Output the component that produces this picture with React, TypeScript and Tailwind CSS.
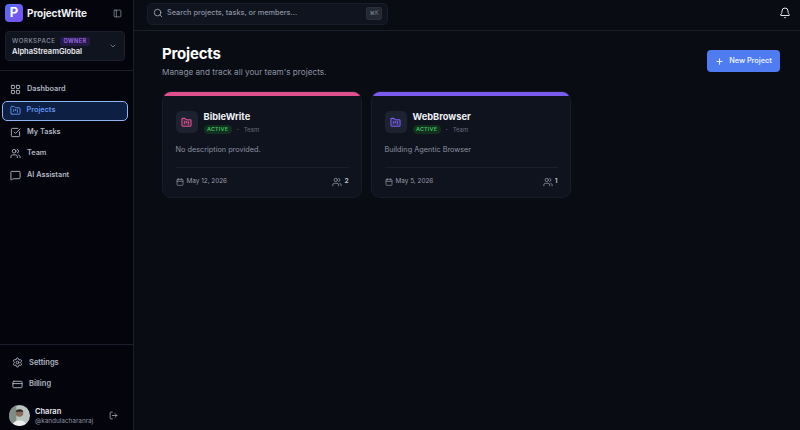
import { Bell, Calendar, ChevronDown, CreditCard, FolderKanban, LayoutGrid, LogOut, MessageSquare, PanelLeft, Plus, Search, Settings, SquareCheckBig, Users } from "lucide-react";

const navItems = [
  { label: "Dashboard", icon: LayoutGrid },
  { label: "Projects", icon: FolderKanban, active: true },
  { label: "My Tasks", icon: SquareCheckBig },
  { label: "Team", icon: Users },
  { label: "AI Assistant", icon: MessageSquare },
];

const projects = [
  { name: "BibleWrite", description: "No description provided.", date: "May 12, 2026", members: 2, bar: "bg-[#e0508f]", icon: "text-[#e0508f] fill-[#e0508f]/20" },
  { name: "WebBrowser", description: "Building Agentic Browser", date: "May 5, 2026", members: 1, bar: "bg-[#7c5cf0]", icon: "text-[#7c5cf0] fill-[#7c5cf0]/20" },
];

function Avatar() {
  return (
    <svg className="h-[21px] w-[21px] shrink-0 rounded-full" viewBox="0 0 20 20">
      <rect width="20" height="20" fill="#b9c4c0" />
      <rect width="7" height="20" fill="#7f8f86" />
      <circle cx="10" cy="7.5" r="3.6" fill="#8a6a58" />
      <path d="M6.4 6.5 C6.6 3.4 13.4 3.4 13.6 6.5 Z" fill="#2f2a28" />
      <path d="M3 20 C3.5 13 16.5 13 17 20 Z" fill="#eef0ee" />
    </svg>
  );
}

export default function App() {
  return (
    <div className="flex h-[430px] w-[800px] overflow-hidden bg-[#0a0c14] font-['Inter',sans-serif] text-white">
      <aside className="flex w-[134px] shrink-0 flex-col border-r border-[#1a1f2b] bg-[#03040c]">
        <div className="flex items-center pl-[5px] pt-[4px]">
          <div className="flex h-[18px] w-[18px] items-center justify-center rounded-[4px] bg-gradient-to-br from-[#4f6df5] to-[#7a4ff0] text-[13px] font-bold">P</div>
          <span className="ml-[4px] text-[10px] font-bold tracking-[-0.1px] text-[#eef0f4]">ProjectWrite</span>
          <PanelLeft className="ml-auto mr-[11px] h-[9px] w-[9px] text-[#8b91a0]" />
        </div>
        <div className="ml-[5px] mr-[8px] mt-[9px] flex h-[30px] items-center justify-between rounded-[4px] border border-[#1a1f2b] bg-[#10141f] pl-[6px] pr-[7px]">
          <div>
            <div className="flex items-center gap-[4px] leading-none">
              <span className="text-[6.2px] font-medium tracking-[0.5px] text-[#8b91a0]">WORKSPACE</span>
              <span className="rounded-[2px] bg-[#241a45] px-[4px] py-[1.5px] text-[5.5px] font-semibold tracking-[0.4px] text-[#a66cf0]">OWNER</span>
            </div>
            <div className="mt-[2px] text-[7.5px] font-semibold leading-none text-[#e8eaef]">AlphaStreamGlobal</div>
          </div>
          <ChevronDown className="h-[8px] w-[8px] text-[#9aa0ad]" />
        </div>
        <nav className="mt-[9px] flex flex-col gap-[1.5px] border-t border-[#1a1f2b] pl-[2px] pr-[5px] pt-[8px]">
          {navItems.map(({ label, icon: Icon, active }) => (
            <div
              key={label}
              className={
                active
                  ? "flex h-[20px] items-center gap-[6px] rounded-[5px] border-[1.5px] border-[#8cb4ee] bg-[#0e1f44] pl-[6.5px] text-[#5e96f2]"
                  : "flex h-[20px] items-center gap-[6px] rounded-[5px] border border-transparent pl-[7px] text-[#b0b5c0]"
              }
            >
              <Icon className="h-[11px] w-[11px]" />
              <span className="text-[7.3px] font-semibold">{label}</span>
            </div>
          ))}
        </nav>
        <div className="mt-auto border-t border-[#1a1f2b] pt-[7px]">
          <div className="flex h-[21px] items-center gap-[6px] pl-[12px] text-[#b0b5c0]">
            <Settings className="h-[11px] w-[11px]" />
            <span className="text-[7.5px] font-semibold">Settings</span>
          </div>
          <div className="flex h-[22px] items-center gap-[6px] pl-[12px] text-[#b0b5c0]">
            <CreditCard className="h-[11px] w-[11px]" />
            <span className="text-[7.5px] font-semibold">Billing</span>
          </div>
          <div className="mb-[4px] mt-[10px] flex h-[21px] items-center pl-[9px]">
            <Avatar />
            <div className="ml-[5px] pt-[1px]">
              <div className="text-[7.5px] font-semibold leading-[10px] text-[#e8eaef]">Charan</div>
              <div className="text-[6.4px] leading-[9px] text-[#8b91a0]">@kandulacharanraj</div>
            </div>
            <LogOut className="ml-auto mr-[15px] h-[9px] w-[9px] text-[#b0b5c0]" />
          </div>
        </div>
      </aside>

      <div className="flex min-w-0 flex-1 flex-col">
        <header className="flex h-[31px] shrink-0 items-start justify-between border-b border-[#1a1f2b] pl-[13px] pr-[9px] pt-[2.5px]">
          <div className="flex h-[22px] w-[241px] items-center rounded-[5px] border border-[#181d29] bg-[#10141f] pl-[5px] pr-[5px]">
            <Search className="mb-[1px] h-[10px] w-[10px] text-[#a4a9b5]" />
            <span className="ml-[4px] text-[7.3px] font-medium text-[#8b91a0]">Search projects, tasks, or members...</span>
            <span className="ml-auto flex h-[13px] w-[16px] items-center justify-center rounded-[2px] border border-[#2a2f3b] bg-[#232833] text-[5.5px] text-[#7d8391]">⌘K</span>
          </div>
          <Bell className="mt-[4.5px] h-[12px] w-[12px] text-[#e2e4e9]" />
        </header>

        <main className="flex-1 pl-[28px] pr-[20px] pt-[14px]">
          <div className="flex items-start justify-between">
            <div>
              <h1 className="text-[15px] font-bold leading-[18px] tracking-[-0.2px]">Projects</h1>
              <p className="mt-[3px] text-[8.2px] leading-[12px] text-[#8b91a0]">Manage and track all your team's projects.</p>
            </div>
            <button type="button" className="mt-[5px] flex h-[22px] w-[73px] items-center justify-center gap-[5px] rounded-[4px] bg-[#4f7cf0] text-[7.3px] font-semibold text-[#e6edff]">
              <Plus className="h-[9px] w-[9px]" strokeWidth={3} />
              New Project
            </button>
          </div>

          <section className="mt-[13px] grid grid-cols-3 gap-[9px]">
            {projects.map((project) => (
              <article key={project.name} className="h-[107px] overflow-hidden rounded-[9px] border border-[#171c28] bg-[#0f131e]">
                <div className={`h-[4px] ${project.bar}`} />
                <div className="px-[12.5px] pt-[14px]">
                  <div className="flex items-center gap-[6px]">
                    <div className="flex h-[22px] w-[22px] items-center justify-center rounded-[5px] bg-[#1c2230]">
                      <FolderKanban className={`h-[11px] w-[11px] ${project.icon}`} strokeWidth={2.25} />
                    </div>
                    <div>
                      <div className="text-[9.3px] font-bold leading-[13px] text-[#eef0f4]">{project.name}</div>
                      <div className="mt-[2px] flex items-center text-[6px] leading-[9px] text-[#666c79]">
                        <span className="rounded-full bg-[#12301f] px-[3.5px] text-[5.4px] font-semibold tracking-[0.2px] text-[#3fc060]">ACTIVE</span>
                        <span className="mx-[5px] font-bold">·</span>
                        <span>Team</span>
                      </div>
                    </div>
                  </div>
                  <p className="mt-[10px] text-[7.3px] leading-[11px] text-[#8b91a0]">{project.description}</p>
                  <div className="mt-[12px] flex items-center justify-between border-t border-[#1a1f2b] pt-[9px]">
                    <div className="flex items-center gap-[3px] text-[6.4px] text-[#969ba8]">
                      <Calendar className="h-[8px] w-[8px]" />
                      {project.date}
                    </div>
                    <div className="flex items-center gap-[2px] text-[6.6px] font-semibold text-[#c8ccd4]">
                      <Users className="h-[10px] w-[10px] text-[#8b91a0]" />
                      {project.members}
                    </div>
                  </div>
                </div>
              </article>
            ))}
          </section>
        </main>
      </div>
    </div>
  );
}
